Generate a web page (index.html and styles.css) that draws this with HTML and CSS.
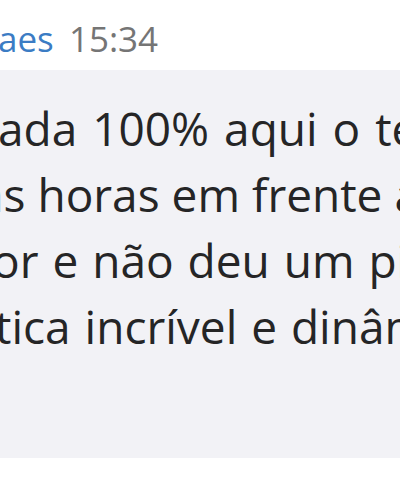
FILE: index.html
```html
<!DOCTYPE html>
<html lang="pt">
<head>
<meta charset="utf-8">
<link rel="stylesheet" href="styles.css">
</head>
<body>
<div class="page">
  <div class="header">
    <span class="name">aes</span>
    <span class="time">15:34</span>
  </div>
  <div class="bubble">
    <div class="line l1">ada 100% aqui o te</div>
    <div class="line l2">as horas em frente a</div>
    <div class="line l3">or e não deu um pi</div>
    <div class="line l4">tica incrível e dinâm</div>
  </div>
  <div class="below"></div>
</div>
</body>
</html>
```
FILE: styles.css
```css
html, body {
  margin: 0;
  padding: 0;
  background: #ffffff;
}
.page {
  width: 400px;
  height: 500px;
  overflow: hidden;
  font-family: "Open Sans", "Noto Sans", sans-serif;
}
.header {
  height: 70px;
  box-sizing: border-box;
  padding-top: 16px;
  font-size: 35px;
  line-height: 46px;
  white-space: nowrap;
  margin-left: -2px;
}
.name {
  color: #3b7cc4;
}
.time {
  color: #757575;
  margin-left: 6px;
}
.bubble {
  height: 388px;
  background: #f2f2f6;
  box-sizing: border-box;
  padding-top: 25px;
  overflow: hidden;
}
.line {
  font-size: 46px;
  line-height: 66px;
  color: #252526;
  white-space: nowrap;
  word-spacing: 2px;
}
.l1 {
  margin-left: -2px;
  word-spacing: 3px;
}
.l2 {
  margin-left: -22px;
  word-spacing: 0;
}
.l3 {
  margin-left: -8px;
}
.l4 {
  margin-left: -5px;
}
.below {
  height: 42px;
  background: #ffffff;
}
```
